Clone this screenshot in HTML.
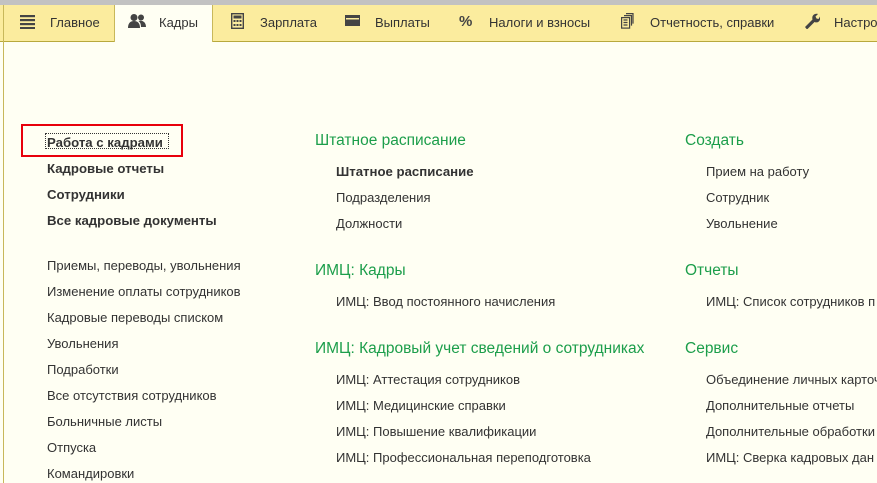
<!DOCTYPE html>
<html><head><meta charset="utf-8"><style>
body{margin:0;width:877px;height:483px;overflow:hidden;background:#fffff3;font-family:"Liberation Sans","DejaVu Sans",sans-serif;position:relative}
.top{position:absolute;left:0;top:0;width:877px;height:5px;background:#c2c2c2}
.bar{position:absolute;left:0;top:5px;width:877px;height:36px;background:#fbec9e;border-bottom:1px solid #b8a93c}
.lb{position:absolute;left:3px;top:5px;width:1px;height:478px;background:#c8b85a}
.act{position:absolute;left:114px;top:5px;width:99px;height:37px;background:#fffff3;border-left:1px solid #c8b85a;border-right:1px solid #c8b85a;box-sizing:border-box}
.t{position:absolute;top:15px;font-size:13px;color:#333;white-space:nowrap}
.i{position:absolute;top:14px}
.a{position:absolute;font-size:13px;color:#333;white-space:nowrap}
.b{font-weight:bold;font-size:13.2px}
.h{position:absolute;font-size:15.5px;color:#1c9e4b;white-space:nowrap}
</style></head><body>
<div class="top"></div><div class="bar"></div><div class="act"></div><div class="lb"></div>
<svg class="i" style="left:20px;top:14px" width="15" height="15"><g fill="#444"><rect y="1" width="15" height="2.2"/><rect y="5" width="15" height="2.2"/><rect y="9" width="15" height="2.2"/><rect y="13" width="15" height="2"/></g></svg>
<div class="t" style="left:50px">Главное</div>
<svg class="i" style="left:128px;top:13px" width="18" height="16"><g fill="#444"><circle cx="6" cy="4.5" r="3.5"/><path d="M0 15c0-5 2.5-7 6-7s6 2 6 7z"/><circle cx="13" cy="4.5" r="3"/><path d="M10.5 8c4.5-1 7.5 1.5 7.5 6h-5c0-3-1-5-2.5-6z"/></g></svg>
<div class="t" style="left:159px">Кадры</div>
<svg class="i" style="left:231px;top:13px" width="13" height="16"><rect x="0.7" y="0.7" width="11.6" height="14.6" fill="none" stroke="#444" stroke-width="1.4"/><rect x="2.5" y="2.5" width="8" height="3" fill="#444"/><g fill="#444"><rect x="2.5" y="7" width="2" height="2"/><rect x="5.5" y="7" width="2" height="2"/><rect x="8.5" y="7" width="2" height="2"/><rect x="2.5" y="11" width="2" height="2"/><rect x="5.5" y="11" width="2" height="2"/><rect x="8.5" y="11" width="2" height="2"/></g></svg>
<div class="t" style="left:260px">Зарплата</div>
<svg class="i" style="left:345px;top:15px" width="15" height="12"><rect x="0" y="0" width="15" height="11" fill="#444"/><rect x="1" y="3" width="13" height="1.5" fill="#fbec9e"/></svg>
<div class="t" style="left:375px">Выплаты</div>
<div class="t" style="left:459px;font-weight:bold;font-size:15px;color:#444;top:13px">%</div>
<div class="t" style="left:489px">Налоги и взносы</div>
<svg class="i" style="left:621px;top:13px" width="13" height="16"><g fill="none" stroke="#444" stroke-width="1.2"><rect x="0.6" y="4.6" width="8" height="10.5"/><path d="M2.5 7h4M2.5 9.5h4M2.5 12h4"/><path d="M3 2.6h7.5v10"/><path d="M5 0.6h7v10"/></g></svg>
<div class="t" style="left:650px">Отчетность, справки</div>
<svg class="i" style="left:804px;top:13px" width="16" height="16"><path d="M1 14l7.5-7.5c-1-3.5 1.5-6.5 5.5-5.5l-2.5 2.5 1 2 2 .5 1.5-2.5c1 4.5-2 7-5.5 5.5l-7.5 7.5z" fill="#444"/></svg>
<div class="t" style="left:834px">Настро</div>

<div style="position:absolute;left:21px;top:124px;width:162px;height:33px;border:2px solid #e8000b;box-sizing:border-box"></div>
<div style="position:absolute;left:45px;top:133px;width:122px;height:14px;border:1px dotted #333"></div>
<div class="a b" style="left:47px;top:135px">Работа с кадрами</div>
<div class="a b" style="left:47px;top:161px">Кадровые отчеты</div>
<div class="a b" style="left:47px;top:187px">Сотрудники</div>
<div class="a b" style="left:47px;top:213px">Все кадровые документы</div>
<div class="a" style="left:47px;top:258px">Приемы, переводы, увольнения</div>
<div class="a" style="left:47px;top:284px">Изменение оплаты сотрудников</div>
<div class="a" style="left:47px;top:310px">Кадровые переводы списком</div>
<div class="a" style="left:47px;top:336px">Увольнения</div>
<div class="a" style="left:47px;top:362px">Подработки</div>
<div class="a" style="left:47px;top:388px">Все отсутствия сотрудников</div>
<div class="a" style="left:47px;top:414px">Больничные листы</div>
<div class="a" style="left:47px;top:440px">Отпуска</div>
<div class="a" style="left:47px;top:466px">Командировки</div>

<div class="h" style="left:315px;top:132px">Штатное расписание</div>
<div class="a b" style="left:336px;top:164px">Штатное расписание</div>
<div class="a" style="left:336px;top:190px">Подразделения</div>
<div class="a" style="left:336px;top:216px">Должности</div>
<div class="h" style="left:315px;top:262px">ИМЦ: Кадры</div>
<div class="a" style="left:336px;top:294px">ИМЦ: Ввод постоянного начисления</div>
<div class="h" style="left:315px;top:340px">ИМЦ: Кадровый учет сведений о сотрудниках</div>
<div class="a" style="left:336px;top:372px">ИМЦ: Аттестация сотрудников</div>
<div class="a" style="left:336px;top:398px">ИМЦ: Медицинские справки</div>
<div class="a" style="left:336px;top:424px">ИМЦ: Повышение квалификации</div>
<div class="a" style="left:336px;top:450px">ИМЦ: Профессиональная переподготовка</div>

<div class="h" style="left:685px;top:132px">Создать</div>
<div class="a" style="left:706px;top:164px">Прием на работу</div>
<div class="a" style="left:706px;top:190px">Сотрудник</div>
<div class="a" style="left:706px;top:216px">Увольнение</div>
<div class="h" style="left:685px;top:262px">Отчеты</div>
<div class="a" style="left:706px;top:294px">ИМЦ: Список сотрудников п</div>
<div class="h" style="left:685px;top:340px">Сервис</div>
<div class="a" style="left:706px;top:372px">Объединение личных карточ</div>
<div class="a" style="left:706px;top:398px">Дополнительные отчеты</div>
<div class="a" style="left:706px;top:424px">Дополнительные обработки</div>
<div class="a" style="left:706px;top:450px">ИМЦ: Сверка кадровых дан</div>
</body></html>
